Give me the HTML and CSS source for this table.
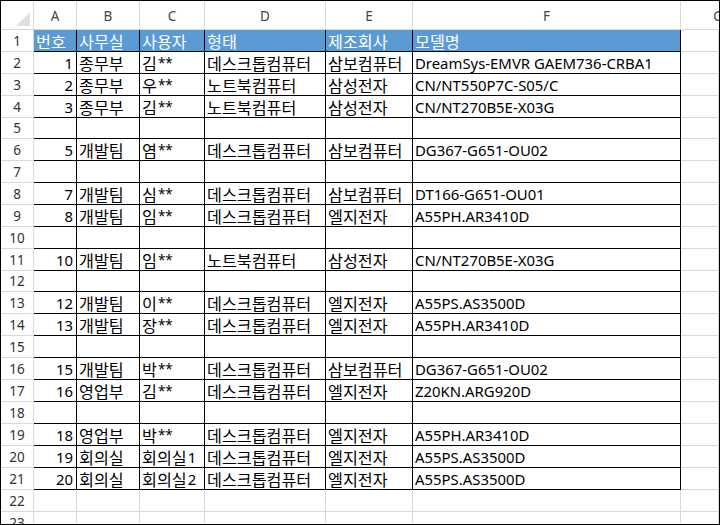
FILE: index.html
```html
<!DOCTYPE html>
<html lang="ko">
<head>
<meta charset="utf-8">
<link rel="stylesheet" href="styles.css">
</head>
<body>
<div class="frame">
<div class="sheet">
  <div class="corner"><span class="tri"></span></div>
  <div class="ch">A</div><div class="ch">B</div><div class="ch">C</div><div class="ch">D</div><div class="ch">E</div><div class="ch">F</div><div class="ch gcol">G</div>

  <div class="rh">1</div>
  <div class="c t h">번호</div><div class="c t h">사무실</div><div class="c t h">사용자</div><div class="c t h">형태</div><div class="c t h">제조회사</div><div class="c t h">모델명</div><div class="c"></div>

  <div class="rh">2</div>
  <div class="c t num">1</div><div class="c t">종무부</div><div class="c t">김<span class="ast">**</span></div><div class="c t">데스크톱컴퓨터</div><div class="c t">삼보컴퓨터</div><div class="c t en">DreamSys-EMVR GAEM736-CRBA1</div><div class="c"></div>

  <div class="rh">3</div>
  <div class="c t num">2</div><div class="c t">종무부</div><div class="c t">우<span class="ast">**</span></div><div class="c t">노트북컴퓨터</div><div class="c t">삼성전자</div><div class="c t en">CN/NT550P7C-S05/C</div><div class="c"></div>

  <div class="rh">4</div>
  <div class="c t num">3</div><div class="c t">종무부</div><div class="c t">김<span class="ast">**</span></div><div class="c t">노트북컴퓨터</div><div class="c t">삼성전자</div><div class="c t en">CN/NT270B5E-X03G</div><div class="c"></div>

  <div class="rh">5</div>
  <div class="c t"></div><div class="c t"></div><div class="c t"></div><div class="c t"></div><div class="c t"></div><div class="c t"></div><div class="c"></div>

  <div class="rh">6</div>
  <div class="c t num">5</div><div class="c t">개발팀</div><div class="c t">염<span class="ast">**</span></div><div class="c t">데스크톱컴퓨터</div><div class="c t">삼보컴퓨터</div><div class="c t en">DG367-G651-OU02</div><div class="c"></div>

  <div class="rh">7</div>
  <div class="c t"></div><div class="c t"></div><div class="c t"></div><div class="c t"></div><div class="c t"></div><div class="c t"></div><div class="c"></div>

  <div class="rh">8</div>
  <div class="c t num">7</div><div class="c t">개발팀</div><div class="c t">심<span class="ast">**</span></div><div class="c t">데스크톱컴퓨터</div><div class="c t">삼보컴퓨터</div><div class="c t en">DT166-G651-OU01</div><div class="c"></div>

  <div class="rh">9</div>
  <div class="c t num">8</div><div class="c t">개발팀</div><div class="c t">임<span class="ast">**</span></div><div class="c t">데스크톱컴퓨터</div><div class="c t">엘지전자</div><div class="c t en">A55PH.AR3410D</div><div class="c"></div>

  <div class="rh">10</div>
  <div class="c t"></div><div class="c t"></div><div class="c t"></div><div class="c t"></div><div class="c t"></div><div class="c t"></div><div class="c"></div>

  <div class="rh">11</div>
  <div class="c t num">10</div><div class="c t">개발팀</div><div class="c t">임<span class="ast">**</span></div><div class="c t">노트북컴퓨터</div><div class="c t">삼성전자</div><div class="c t en">CN/NT270B5E-X03G</div><div class="c"></div>

  <div class="rh">12</div>
  <div class="c t"></div><div class="c t"></div><div class="c t"></div><div class="c t"></div><div class="c t"></div><div class="c t"></div><div class="c"></div>

  <div class="rh">13</div>
  <div class="c t num">12</div><div class="c t">개발팀</div><div class="c t">이<span class="ast">**</span></div><div class="c t">데스크톱컴퓨터</div><div class="c t">엘지전자</div><div class="c t en">A55PS.AS3500D</div><div class="c"></div>

  <div class="rh">14</div>
  <div class="c t num">13</div><div class="c t">개발팀</div><div class="c t">장<span class="ast">**</span></div><div class="c t">데스크톱컴퓨터</div><div class="c t">엘지전자</div><div class="c t en">A55PH.AR3410D</div><div class="c"></div>

  <div class="rh">15</div>
  <div class="c t"></div><div class="c t"></div><div class="c t"></div><div class="c t"></div><div class="c t"></div><div class="c t"></div><div class="c"></div>

  <div class="rh">16</div>
  <div class="c t num">15</div><div class="c t">개발팀</div><div class="c t">박<span class="ast">**</span></div><div class="c t">데스크톱컴퓨터</div><div class="c t">삼보컴퓨터</div><div class="c t en">DG367-G651-OU02</div><div class="c"></div>

  <div class="rh">17</div>
  <div class="c t num">16</div><div class="c t">영업부</div><div class="c t">김<span class="ast">**</span></div><div class="c t">데스크톱컴퓨터</div><div class="c t">엘지전자</div><div class="c t en">Z20KN.ARG920D</div><div class="c"></div>

  <div class="rh">18</div>
  <div class="c t"></div><div class="c t"></div><div class="c t"></div><div class="c t"></div><div class="c t"></div><div class="c t"></div><div class="c"></div>

  <div class="rh">19</div>
  <div class="c t num">18</div><div class="c t">영업부</div><div class="c t">박<span class="ast">**</span></div><div class="c t">데스크톱컴퓨터</div><div class="c t">엘지전자</div><div class="c t en">A55PH.AR3410D</div><div class="c"></div>

  <div class="rh">20</div>
  <div class="c t num">19</div><div class="c t">회의실</div><div class="c t">회의실<span class="dig">1</span></div><div class="c t">데스크톱컴퓨터</div><div class="c t">엘지전자</div><div class="c t en">A55PS.AS3500D</div><div class="c"></div>

  <div class="rh">21</div>
  <div class="c t num">20</div><div class="c t">회의실</div><div class="c t">회의실<span class="dig">2</span></div><div class="c t">데스크톱컴퓨터</div><div class="c t">엘지전자</div><div class="c t en">A55PS.AS3500D</div><div class="c"></div>

  <div class="rh">22</div>
  <div class="c"></div><div class="c"></div><div class="c"></div><div class="c"></div><div class="c"></div><div class="c"></div><div class="c"></div>

  <div class="rh">23</div>
  <div class="c"></div><div class="c"></div><div class="c"></div><div class="c"></div><div class="c"></div><div class="c"></div><div class="c"></div>
</div>
</div>
</body>
</html>
```

FILE: styles.css
```css
html, body {
  margin: 0;
  padding: 0;
  background: #ffffff;
}

.frame {
  width: 720px;
  height: 525px;
  box-sizing: border-box;
  border: 1px solid #000;
  overflow: hidden;
  background: #fff;
}

.sheet {
  display: grid;
  grid-template-columns: 33px 43px 63px 65px 121px 87px 268px 38px;
  grid-template-rows: 29px repeat(4, 22px) 21px repeat(6, 22px) 21px repeat(11, 22px);
  font-family: "Noto Sans", "Noto Sans CJK KR", sans-serif;
  font-size: 16.2px;
  color: #000;
}

.sheet > div {
  box-sizing: border-box;
  border-right: 1px solid #d9d9d9;
  border-bottom: 1px solid #d9d9d9;
  display: flex;
  align-items: center;
  white-space: nowrap;
  overflow: hidden;
  min-width: 0;
}

.corner {
  position: relative;
  background: #fff;
}

.corner .tri {
  position: absolute;
  right: 3px;
  bottom: 3px;
  width: 0;
  height: 0;
  border-left: 14px solid transparent;
  border-bottom: 14px solid #dfdfdf;
}

.ch {
  justify-content: center;
  font-size: 13.5px;
  color: #444;
  padding-top: 1px;
}

.gcol {
  justify-content: flex-end;
  margin-right: -5px;
}

.rh {
  justify-content: center;
  font-size: 13.5px;
  color: #333;
}

.c {
  padding: 0 2px 0 2px;
}

.en {
  font-size: 14.9px;
}

.ast {
  font-size: 13.5px;
  margin-left: 1px;
}

.dig {
  font-size: 14.9px;
  margin-left: 1px;
}

.sheet > .t {
  border-right-color: #000;
  border-bottom-color: #000;
}

.h {
  background: #5b9bd5;
  color: #fff;
}

.sheet > .num {
  justify-content: flex-end;
  padding-right: 3px;
  font-size: 14.9px;
}
```
